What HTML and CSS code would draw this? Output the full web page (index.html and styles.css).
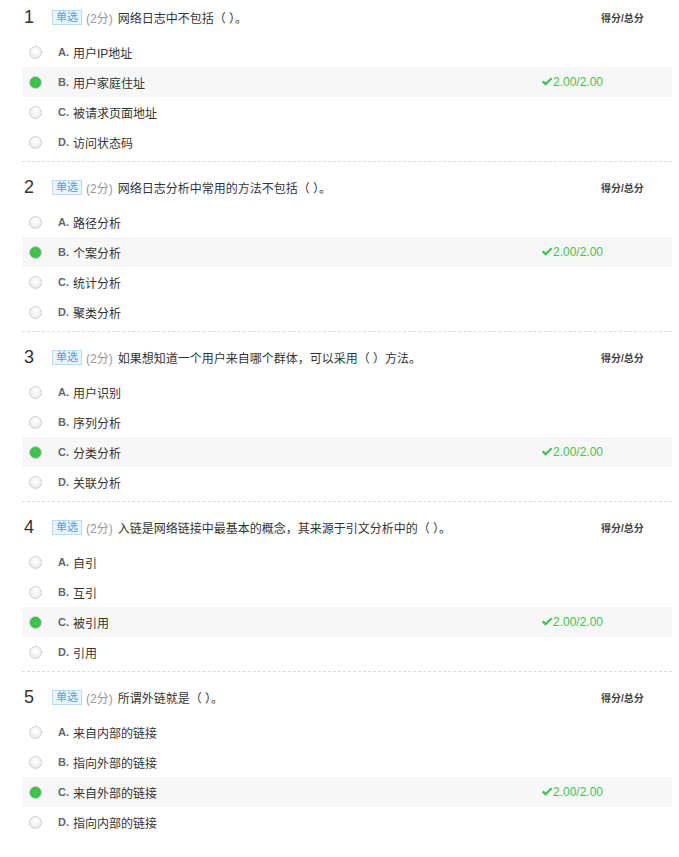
FILE: index.html
```html
<!DOCTYPE html>
<html lang="zh-CN">
<head>
<meta charset="utf-8">
<title>作业</title>
<link rel="stylesheet" href="styles.css">
</head>
<body>
<div class="page">

  <div class="q">
    <div class="q-head">
      <span class="q-num">1</span>
      <span class="badge">单选</span>
      <span class="pts">(2分)</span>
      <span class="q-title">网络日志中不包括（ ）。</span>
      <span class="score-head">得分/总分</span>
    </div>
    <ul class="opts">
      <li class="opt"><span class="radio"></span><span class="letter">A.</span><span class="opt-text">用户IP地址</span></li>
      <li class="opt sel"><span class="radio on"></span><span class="letter">B.</span><span class="opt-text">用户家庭住址</span><span class="score"><svg class="chk" viewBox="0 0 12 10" width="12" height="10"><path d="M0.8 5.2 L2.6 3.6 L4.6 5.6 L10 0.6 L11.4 2 L4.6 8.8 Z" fill="#3dc452"/></svg>2.00/2.00</span></li>
      <li class="opt"><span class="radio"></span><span class="letter">C.</span><span class="opt-text">被请求页面地址</span></li>
      <li class="opt"><span class="radio"></span><span class="letter">D.</span><span class="opt-text">访问状态码</span></li>
    </ul>
  </div>

  <div class="q">
    <div class="q-head">
      <span class="q-num">2</span>
      <span class="badge">单选</span>
      <span class="pts">(2分)</span>
      <span class="q-title">网络日志分析中常用的方法不包括（ ）。</span>
      <span class="score-head">得分/总分</span>
    </div>
    <ul class="opts">
      <li class="opt"><span class="radio"></span><span class="letter">A.</span><span class="opt-text">路径分析</span></li>
      <li class="opt sel"><span class="radio on"></span><span class="letter">B.</span><span class="opt-text">个案分析</span><span class="score"><svg class="chk" viewBox="0 0 12 10" width="12" height="10"><path d="M0.8 5.2 L2.6 3.6 L4.6 5.6 L10 0.6 L11.4 2 L4.6 8.8 Z" fill="#3dc452"/></svg>2.00/2.00</span></li>
      <li class="opt"><span class="radio"></span><span class="letter">C.</span><span class="opt-text">统计分析</span></li>
      <li class="opt"><span class="radio"></span><span class="letter">D.</span><span class="opt-text">聚类分析</span></li>
    </ul>
  </div>

  <div class="q">
    <div class="q-head">
      <span class="q-num">3</span>
      <span class="badge">单选</span>
      <span class="pts">(2分)</span>
      <span class="q-title">如果想知道一个用户来自哪个群体，可以采用（ ）方法。</span>
      <span class="score-head">得分/总分</span>
    </div>
    <ul class="opts">
      <li class="opt"><span class="radio"></span><span class="letter">A.</span><span class="opt-text">用户识别</span></li>
      <li class="opt"><span class="radio"></span><span class="letter">B.</span><span class="opt-text">序列分析</span></li>
      <li class="opt sel"><span class="radio on"></span><span class="letter">C.</span><span class="opt-text">分类分析</span><span class="score"><svg class="chk" viewBox="0 0 12 10" width="12" height="10"><path d="M0.8 5.2 L2.6 3.6 L4.6 5.6 L10 0.6 L11.4 2 L4.6 8.8 Z" fill="#3dc452"/></svg>2.00/2.00</span></li>
      <li class="opt"><span class="radio"></span><span class="letter">D.</span><span class="opt-text">关联分析</span></li>
    </ul>
  </div>

  <div class="q">
    <div class="q-head">
      <span class="q-num">4</span>
      <span class="badge">单选</span>
      <span class="pts">(2分)</span>
      <span class="q-title">入链是网络链接中最基本的概念，其来源于引文分析中的（ ）。</span>
      <span class="score-head">得分/总分</span>
    </div>
    <ul class="opts">
      <li class="opt"><span class="radio"></span><span class="letter">A.</span><span class="opt-text">自引</span></li>
      <li class="opt"><span class="radio"></span><span class="letter">B.</span><span class="opt-text">互引</span></li>
      <li class="opt sel"><span class="radio on"></span><span class="letter">C.</span><span class="opt-text">被引用</span><span class="score"><svg class="chk" viewBox="0 0 12 10" width="12" height="10"><path d="M0.8 5.2 L2.6 3.6 L4.6 5.6 L10 0.6 L11.4 2 L4.6 8.8 Z" fill="#3dc452"/></svg>2.00/2.00</span></li>
      <li class="opt"><span class="radio"></span><span class="letter">D.</span><span class="opt-text">引用</span></li>
    </ul>
  </div>

  <div class="q last">
    <div class="q-head">
      <span class="q-num">5</span>
      <span class="badge">单选</span>
      <span class="pts">(2分)</span>
      <span class="q-title">所谓外链就是（ ）。</span>
      <span class="score-head">得分/总分</span>
    </div>
    <ul class="opts">
      <li class="opt"><span class="radio"></span><span class="letter">A.</span><span class="opt-text">来自内部的链接</span></li>
      <li class="opt"><span class="radio"></span><span class="letter">B.</span><span class="opt-text">指向外部的链接</span></li>
      <li class="opt sel"><span class="radio on"></span><span class="letter">C.</span><span class="opt-text">来自外部的链接</span><span class="score"><svg class="chk" viewBox="0 0 12 10" width="12" height="10"><path d="M0.8 5.2 L2.6 3.6 L4.6 5.6 L10 0.6 L11.4 2 L4.6 8.8 Z" fill="#3dc452"/></svg>2.00/2.00</span></li>
      <li class="opt"><span class="radio"></span><span class="letter">D.</span><span class="opt-text">指向内部的链接</span></li>
    </ul>
  </div>

</div>
</body>
</html>
```

FILE: styles.css
```css
html, body {
  margin: 0;
  padding: 0;
  background: #fff;
}

body {
  font-family: "Liberation Sans", "Noto Sans CJK SC", sans-serif;
  color: #333;
  font-size: 12px;
}

.page {
  width: 650px;
  margin-left: 22px;
}

.q {
  padding-top: 15px;
  padding-bottom: 4px;
  border-bottom: 1px dashed #dcdcdc;
}

.q:first-child {
  padding-top: 7px;
}

.q.last {
  border-bottom: none;
}

.q-head {
  display: flex;
  align-items: center;
  height: 20px;
  margin-bottom: 10px;
}

.q-num {
  width: 30px;
  padding-left: 2px;
  box-sizing: border-box;
  font-size: 18px;
  line-height: 20px;
  color: #333;
}

.badge {
  display: inline-block;
  width: 30px;
  height: 15px;
  box-sizing: border-box;
  border: 1px solid #b9dcf5;
  background: #e9f4fc;
  color: #5b9bd5;
  font-size: 11px;
  line-height: 13px;
  text-align: center;
  margin-right: 4px;
}

.pts {
  color: #999;
  font-size: 12px;
  margin-right: 5px;
}

.q-title {
  flex: 1;
  font-size: 12px;
  color: #333;
}

.score-head {
  width: 71px;
  font-size: 10px;
  font-weight: bold;
  color: #444;
}

.opts {
  list-style: none;
  margin: 0;
  padding: 0;
}

.opt {
  display: flex;
  align-items: center;
  height: 30px;
  padding-left: 7px;
}

.opt.sel {
  background: #f7f7f7;
}

.radio {
  width: 13px;
  height: 13px;
  box-sizing: border-box;
  border-radius: 50%;
  border: 1px solid #cfcfcf;
  background: radial-gradient(circle at 50% 35%, #ffffff 0%, #f2f2f2 55%, #e2e2e2 100%);
  margin-right: 16px;
}

.radio.on {
  border: 1px solid #c8c8c8;
  background: radial-gradient(circle, #3fc94f 0%, #37c348 55%, #3dbf4c 70%, #d9d9d9 78%, #eeeeee 100%);
}

.letter {
  font-size: 11px;
  font-weight: bold;
  color: #666;
  width: 15px;
}

.opt-text {
  flex: 1;
  font-size: 12px;
  color: #333;
}

.score {
  width: 131px;
  display: flex;
  align-items: center;
  color: #3dc452;
  font-size: 12px;
}

.chk {
  margin-right: 0;
}
```
